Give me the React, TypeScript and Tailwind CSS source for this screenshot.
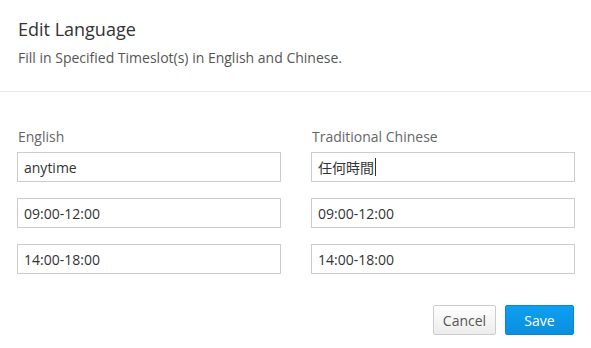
const rows = [
  { en: "anytime", zh: "任何時間" },
  { en: "09:00-12:00", zh: "09:00-12:00" },
  { en: "14:00-18:00", zh: "14:00-18:00" },
];

function Field({ value, focused }: { value: string; focused?: boolean }) {
  if (focused) {
    return (
      <div className="flex h-[30px] w-full items-center border border-[#cccccc] bg-white px-[6px] text-[14px] text-[#333333]">
        <span>{value}</span>
        <span className="ml-px h-[18px] w-px bg-[#333333]" />
      </div>
    );
  }
  return (
    <input
      readOnly
      value={value}
      className="block h-[30px] w-full border border-[#cccccc] bg-white px-[6px] text-[14px] text-[#333333] outline-none"
    />
  );
}

export default function App() {
  return (
    <div
      className="h-[348px] w-[591px] bg-white"
      style={{ fontFamily: '"Open Sans", "Noto Sans CJK TC", sans-serif' }}
    >
      <div className="border-b border-[#e8e8e8] px-[18px] pt-[17px] pb-[23px]">
        <h1 className="text-[18px] leading-[24px] text-[#333333]">Edit Language</h1>
        <p className="mt-[7px] text-[14px] leading-[20px] text-[#555555]">
          Fill in Specified Timeslot(s) in English and Chinese.
        </p>
      </div>

      <div className="grid grid-cols-2 gap-x-[30px] pt-[35px] pr-[16px] pl-[17px]">
        <div className="flex flex-col">
          <label className="mb-[5px] pl-px text-[14px] leading-[20px] text-[#666666]">English</label>
          <div className="flex flex-col gap-[16px]">
            {rows.map((r) => (
              <Field key={r.en} value={r.en} />
            ))}
          </div>
        </div>
        <div className="flex flex-col">
          <label className="mb-[5px] pl-px text-[14px] leading-[20px] text-[#666666]">Traditional Chinese</label>
          <div className="flex flex-col gap-[16px]">
            {rows.map((r, i) => (
              <Field key={r.zh + i} value={r.zh} focused={i === 0} />
            ))}
          </div>
        </div>
      </div>

      <div className="flex justify-end gap-[9px] pt-[31px] pr-[17px]">
        <button
          type="button"
          className="h-[30px] w-[63px] rounded-[2px] border border-[#cccccc] bg-gradient-to-b from-[#ffffff] to-[#ececec] text-[14px] text-[#555555]"
        >
          Cancel
        </button>
        <button
          type="button"
          className="h-[30px] w-[69px] rounded-[2px] border border-[#0a86d0] bg-gradient-to-b from-[#0f9ff0] to-[#0a8fe0] text-[14px] text-white"
        >
          Save
        </button>
      </div>
    </div>
  );
}
